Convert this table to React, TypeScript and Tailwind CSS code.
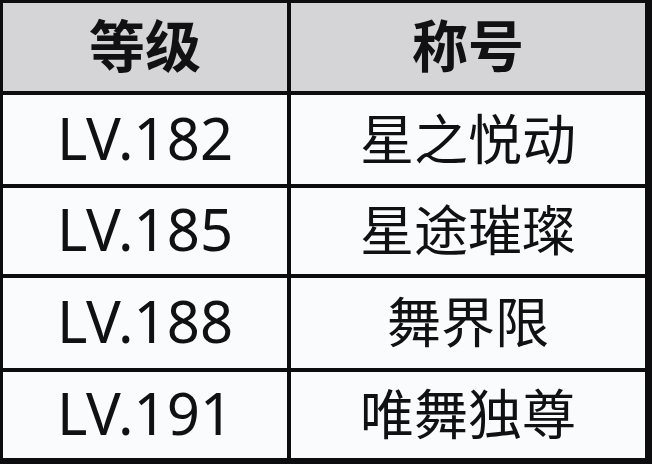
import { Fragment } from "react";

const rows = [
  ["LV.182", "星之悦动"],
  ["LV.185", "星途璀璨"],
  ["LV.188", "舞界限"],
  ["LV.191", "唯舞独尊"],
];

export default function App() {
  return (
    <div className="w-[652px] h-[464px] bg-[#0d0d10] pt-[3px] pl-[3px] pr-[7px] pb-[6px]">
      <div className="grid h-full grid-cols-[284px_354px] grid-rows-[88px_89px_86px_90px_86px] gap-[4px] text-[#111114] font-['Noto_Sans','Noto_Sans_CJK_SC',sans-serif]">
        <div className="flex items-center justify-center pb-[4px] bg-[#d5d5d8] text-[56px] font-semibold leading-none">等级</div>
        <div className="flex items-center justify-center pb-[4px] bg-[#d5d5d8] text-[56px] font-semibold leading-none">称号</div>
        {rows.map(([lv, title]) => (
          <Fragment key={lv}>
            <div className="flex items-center justify-center pb-[4px] bg-[#fafbfd] text-[58px] leading-none">
              {lv}
            </div>
            <div className="flex items-center justify-center pb-[2px] bg-[#fafbfd] text-[54px] leading-none">
              {title}
            </div>
          </Fragment>
        ))}
      </div>
    </div>
  );
}
